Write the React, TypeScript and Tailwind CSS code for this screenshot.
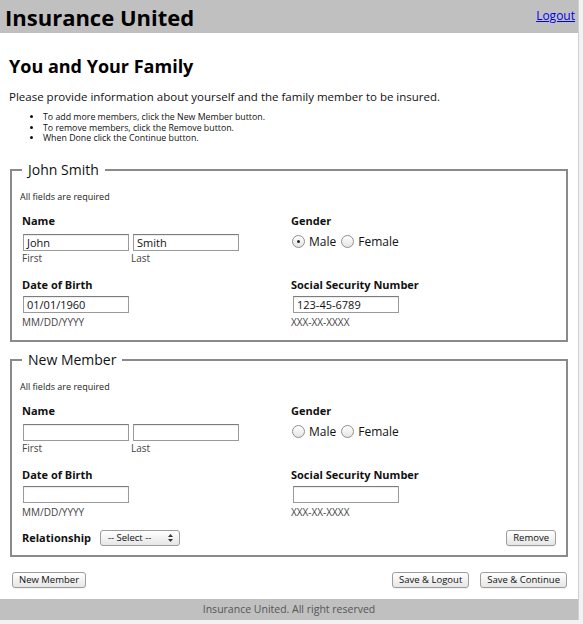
import React from "react";

const font = { fontFamily: '"Open Sans", "DejaVu Sans", sans-serif' };

function Radio({ checked, label }: { checked?: boolean; label: string }) {
  return (
    <span className="inline-flex items-center gap-[4px] mr-[5px]">
      <span className="w-[13px] h-[13px] rounded-full border border-[#8e8e8e] bg-gradient-to-b from-white to-[#e4e4e4] flex items-center justify-center">
        {checked && <span className="w-[3px] h-[3px] rounded-full bg-[#222]" />}
      </span>
      <span className="text-[12px] text-[#111]">{label}</span>
    </span>
  );
}

function TextBox({ value }: { value?: string }) {
  return (
    <div className="w-[106px] h-[17px] border border-[#9a9a9a] border-t-[#7c7c7c] bg-white px-[3px] text-[11px] leading-[15px] text-[#111] shadow-[inset_0_1px_1px_rgba(0,0,0,0.08)]">
      {value}
    </div>
  );
}

function Btn({ children }: { children: React.ReactNode }) {
  return (
    <button className="h-[16px] px-[6px] rounded-[3px] border border-[#9c9c9c] bg-gradient-to-b from-white to-[#e6e6e6] text-[9.5px] leading-[14px] text-[#111] shadow-[0_1px_0_rgba(0,0,0,0.05)]">
      {children}
    </button>
  );
}

const label = "text-[11px] font-bold text-[#111] leading-[14px]";
const hint = "text-[10px] text-[#444] leading-[12px]";

function Member({
  name,
  first,
  last,
  dob,
  ssn,
  male,
  extra,
}: {
  name: string;
  first?: string;
  last?: string;
  dob?: string;
  ssn?: string;
  male?: boolean;
  extra?: boolean;
}) {
  return (
    <fieldset className={`border-2 border-[#8a8a8a] px-[10px] ${extra ? "pb-[9px]" : "pb-[12px]"}`}>
      <legend className="px-[6px] text-[14px] leading-[18px] text-[#111]">{name}</legend>
      <div className="text-[9px] text-[#222] mt-[12px] ml-[-2px] leading-[12px]">All fields are required</div>
      <div className="grid grid-cols-[269px_1fr] mt-[11px]">
        <div>
          <div className={label}>Name</div>
          <div className="flex gap-[4px] mt-[6px] ml-[1px]">
            <TextBox value={first} />
            <TextBox value={last} />
          </div>
          <div className={`flex mt-[1px] ${hint}`}>
            <span className="w-[109px]">First</span>
            <span>Last</span>
          </div>
        </div>
        <div>
          <div className={label}>Gender</div>
          <div className="flex items-center mt-[5px] ml-[1px]">
            <Radio checked={male} label="Male" />
            <Radio label="Female" />
          </div>
        </div>
      </div>
      <div className="grid grid-cols-[269px_1fr] mt-[14px]">
        <div>
          <div className={label}>Date of Birth</div>
          <div className="mt-[4px] ml-[1px]">
            <TextBox value={dob} />
          </div>
          <div className={`mt-[3px] ${hint}`}>MM/DD/YYYY</div>
        </div>
        <div>
          <div className={label}>Social Security Number</div>
          <div className="mt-[4px] ml-[2px]">
            <TextBox value={ssn} />
          </div>
          <div className={`mt-[3px] ${hint}`}>XXX-XX-XXXX</div>
        </div>
      </div>
      {extra && (
        <div className="flex items-center justify-between mt-[12px]">
          <div className="flex items-center gap-[9px]">
            <span className="text-[11px] font-bold text-[#111]">Relationship</span>
            <div className="w-[80px] h-[16px] rounded-[3px] border border-[#9c9c9c] bg-gradient-to-b from-white to-[#e6e6e6] flex items-center justify-between pl-[7px] pr-[6px] text-[9.5px] text-[#111]">
              <span>-- Select --</span>
              <svg width="5" height="8" viewBox="0 0 5 8">
                <path d="M2.5 0L5 3H0z" fill="#333" />
                <path d="M2.5 8L5 5H0z" fill="#333" />
              </svg>
            </div>
          </div>
          <Btn>Remove</Btn>
        </div>
      )}
    </fieldset>
  );
}

export default function App() {
  return (
    <div className="w-[583px] h-[624px] bg-[#f2f2f2] overflow-hidden" style={font}>
      <div className="w-[579px] border-r border-[#cfcfcf] bg-white">
        <div className="h-[33px] bg-[#c0c0c0] flex items-center justify-between pl-[5px] pr-[3px]">
          <span className="text-[22px] font-bold text-black leading-none">Insurance United</span>
          <a href="#" className="text-[12px] text-[#0000ee] underline self-start mt-[7px]">
            Logout
          </a>
        </div>
        <div className="px-[10px] pt-[22px]">
          <h2 className="text-[18px] font-bold text-black leading-[22px] ml-[-1px]">You and Your Family</h2>
          <p className="text-[11.5px] text-[#111] mt-[12px] leading-[16px] ml-[-1px]">
            Please provide information about yourself and the family member to be insured.
          </p>
          <ul className="list-disc pl-[33px] mt-[7px] text-[8.8px] leading-[10.5px] text-[#111] marker:text-[8px]">
            <li>To add more members, click the New Member button.</li>
            <li>To remove members, click the Remove button.</li>
            <li>When Done click the Continue button.</li>
          </ul>
          <div className="mt-[17px]">
            <Member name="John Smith" first="John" last="Smith" dob="01/01/1960" ssn="123-45-6789" male />
          </div>
          <div className="mt-[9px]">
            <Member name="New Member" extra />
          </div>
          <div className="flex items-center justify-between mt-[15px] pl-[2px] pr-[1px] pb-[11px]">
            <Btn>New Member</Btn>
            <div className="flex gap-[11px]">
              <Btn>Save &amp; Logout</Btn>
              <Btn>Save &amp; Continue</Btn>
            </div>
          </div>
        </div>
        <div className="h-[21px] bg-[#c0c0c0] flex items-center justify-center text-[10.5px] text-[#555]">
          Insurance United. All right reserved
        </div>
      </div>
    </div>
  );
}
